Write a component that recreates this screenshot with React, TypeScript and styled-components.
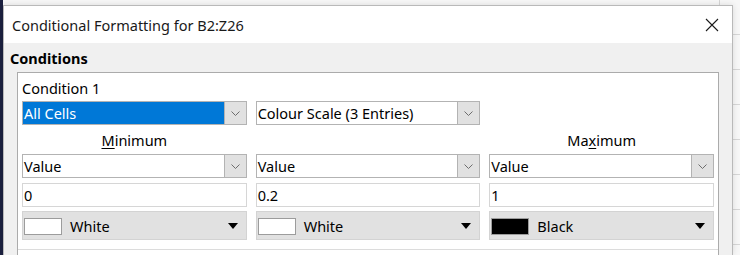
import React from 'react';
import styled, { createGlobalStyle } from 'styled-components';

const GlobalStyle = createGlobalStyle`
  html, body {
    margin: 0;
    padding: 0;
    overflow: hidden;
  }
  body {
    font-family: "Noto Sans", "Liberation Sans", sans-serif;
    color: #000;
  }
`;

const Backdrop = styled.div`
  width: 740px;
  height: 255px;
  box-sizing: border-box;
  padding: 5px 0 0 3px;
  background:
    linear-gradient(to right, #1c2140 0, #1c2140 3px, transparent 3px),
    repeating-linear-gradient(to bottom, transparent 0, transparent 34px, #d6d6d6 34px, #d6d6d6 35px),
    linear-gradient(to right, transparent 0, transparent 719px, #d6d6d6 719px, #d6d6d6 720px, transparent 720px),
    #f7f7f7;
`;

const Dialog = styled.div`
  width: 730px;
  height: 250px;
  box-sizing: border-box;
  border: 1px solid #b9b9b9;
  border-bottom: none;
  background: #f0f0f0;
  display: flex;
  flex-direction: column;
  box-shadow: 0 0 6px rgba(0, 0, 0, 0.12);
`;

const TitleBar = styled.div`
  height: 37px;
  flex-shrink: 0;
  background: #fff;
  display: flex;
  align-items: center;
  justify-content: space-between;
  padding: 0 13px 0 8px;
`;

const Title = styled.span`
  font-size: 14.5px;
  color: #1a1a1a;
`;

const CloseButton = styled.div`
  width: 14px;
  height: 14px;
  display: flex;
  margin-top: 1px;
`;

const Body = styled.div`
  flex: 1;
  padding: 5px 13px 0 6px;
  display: flex;
  flex-direction: column;
  min-height: 0;
`;

const SectionTitle = styled.div`
  font-size: 14.5px;
  font-weight: 700;
  line-height: 20px;
  margin-bottom: 4px;
`;

const Frame = styled.div`
  flex: 1;
  margin-left: 7px;
  background: #fff;
  border: 1px solid #ababab;
  border-bottom: none;
  padding: 5px 4px 0;
  display: flex;
  flex-direction: column;
`;

const Caption = styled.div`
  font-size: 14.5px;
  line-height: 20px;
  margin-bottom: 3px;
`;

const Grid = styled.div`
  display: grid;
  grid-template-columns: repeat(3, 1fr);
  column-gap: 9px;
`;

const Row = styled(Grid)<{ gap?: number }>`
  margin-top: ${p => p.gap ?? 0}px;
`;

const ColumnLabel = styled.div`
  font-size: 14.5px;
  line-height: 20px;
  height: 20px;
  text-align: center;
  margin: 5px 0 4px;
`;

const Combo = styled.div`
  height: 24px;
  box-sizing: border-box;
  border: 1px solid #b3b3b3;
  display: flex;
  background: #fff;
`;

const ComboText = styled.div<{ selected?: boolean }>`
  flex: 1;
  display: flex;
  align-items: center;
  padding-left: 1px;
  font-size: 14.5px;
  background: ${p => (p.selected ? '#0078d7' : 'transparent')};
  color: ${p => (p.selected ? '#fff' : '#000')};
  white-space: nowrap;
  overflow: hidden;
`;

const ComboButton = styled.div`
  width: 21px;
  flex-shrink: 0;
  background: #e1e1e1;
  border-left: 1px solid #b3b3b3;
  display: flex;
  align-items: center;
  justify-content: center;
`;

const Field = styled.div`
  height: 24px;
  box-sizing: border-box;
  border: 1px solid #d6d6d6;
  display: flex;
  align-items: center;
  padding-left: 1px;
  font-size: 14.5px;
`;

const ColourButton = styled.div`
  height: 29px;
  box-sizing: border-box;
  background: #e1e1e1;
  border: 1px solid #d3d3d3;
  display: flex;
  align-items: center;
  padding: 0 8px 0 1px;
`;

const Swatch = styled.div<{ colour: string }>`
  width: 38px;
  height: 17px;
  box-sizing: border-box;
  border: 1px solid #9c9c9c;
  background: ${p => p.colour};
  margin: 1px 8px 0 0;
`;

const ColourName = styled.span`
  flex: 1;
  font-size: 14.5px;
  margin-top: 1px;
`;

const Divider = styled.div`
  height: 1px;
  background: #dcdcdc;
  margin: 9px -4px 0;
`;

const Underlined = styled.span`
  text-decoration: underline;
  text-underline-offset: 2px;
`;

const Chevron = () => (
  <svg width="9" height="5" viewBox="0 0 9 5">
    <path d="M0.5 0.5 L4.5 4.5 L8.5 0.5" fill="none" stroke="#6d6d6d" strokeWidth="1" />
  </svg>
);

const Caret = () => (
  <svg width="10" height="6" viewBox="0 0 10 6">
    <path d="M0 0 H10 L5 6 Z" fill="#000" />
  </svg>
);

const CloseIcon = () => (
  <svg width="14" height="14" viewBox="0 0 14 14">
    <path d="M1 1 L13 13 M13 1 L1 13" stroke="#1a1a1a" strokeWidth="1.1" />
  </svg>
);

const columns = [
  { value: '0', colour: '#fff', name: 'White' },
  { value: '0.2', colour: '#fff', name: 'White' },
  { value: '1', colour: '#000', name: 'Black' },
];

const App: React.FC = () => (
  <>
    <GlobalStyle />
    <Backdrop>
      <Dialog>
        <TitleBar>
          <Title>Conditional Formatting for B2:Z26</Title>
          <CloseButton>
            <CloseIcon />
          </CloseButton>
        </TitleBar>
        <Body>
          <SectionTitle>Conditions</SectionTitle>
          <Frame>
            <Caption>Condition 1</Caption>
            <Grid>
              <Combo>
                <ComboText selected>All Cells</ComboText>
                <ComboButton><Chevron /></ComboButton>
              </Combo>
              <Combo>
                <ComboText>Colour Scale (3 Entries)</ComboText>
                <ComboButton><Chevron /></ComboButton>
              </Combo>
              <div />
            </Grid>
            <Grid>
              <ColumnLabel><Underlined>M</Underlined>inimum</ColumnLabel>
              <ColumnLabel />
              <ColumnLabel>Ma<Underlined>x</Underlined>imum</ColumnLabel>
            </Grid>
            <Row>
              {columns.map((c, i) => (
                <Combo key={i}>
                  <ComboText>Value</ComboText>
                  <ComboButton><Chevron /></ComboButton>
                </Combo>
              ))}
            </Row>
            <Row gap={5}>
              {columns.map((c, i) => (
                <Field key={i}>{c.value}</Field>
              ))}
            </Row>
            <Row gap={4}>
              {columns.map((c, i) => (
                <ColourButton key={i}>
                  <Swatch colour={c.colour} />
                  <ColourName>{c.name}</ColourName>
                  <Caret />
                </ColourButton>
              ))}
            </Row>
            <Divider />
          </Frame>
        </Body>
      </Dialog>
    </Backdrop>
  </>
);

export default App;
